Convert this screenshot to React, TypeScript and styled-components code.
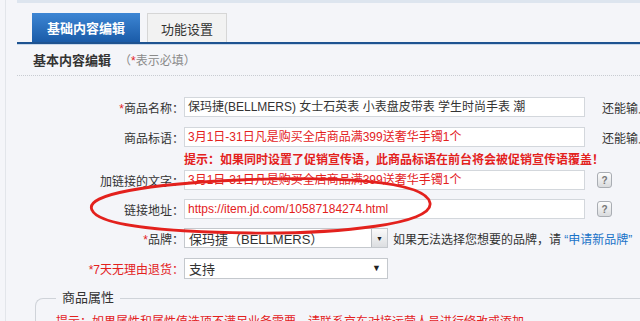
import React from 'react'
import styled, { createGlobalStyle } from 'styled-components'

const GlobalStyle = createGlobalStyle`
  body{
    margin:0;
    background:#f4f5f9;
    font-family:"Liberation Sans","Noto Sans CJK SC",sans-serif;
    font-size:12px;
    color:#333;
  }
`

const RED = '#e3211d'

const Page = styled.div`
  position:relative;
  width:640px;
  height:321px;
  overflow:hidden;
  background:#f4f5f9;
`

const Frame = styled.div`
  margin-left:5px;
  height:100%;
  border-left:1px solid #e2e5ea;
  padding-left:11px;
`

const TopStrip = styled.div`
  height:3px;
  background:#dde5ef;
`

const TabBar = styled.div`
  display:flex;
  align-items:flex-end;
  gap:7px;
  padding:10px 0 0 15px;
  border-bottom:2px solid #1e5391;
  box-shadow:0 1px 0 #c9d8ea;
`

const Tab = styled.div<{ $active?: boolean }>`
  box-sizing:border-box;
  display:flex;
  align-items:center;
  justify-content:center;
  width:${p => (p.$active ? '108px' : '80px')};
  height:29px;
  font-size:13px;
  font-weight:${p => (p.$active ? 700 : 400)};
  color:${p => (p.$active ? '#fff' : '#333')};
  background:${p => (p.$active ? 'linear-gradient(#3d86d4,#1a5ba8)' : '#f2f2f2')};
  border:${p => (p.$active ? 'none' : '1px solid #d6d6d6')};
  border-bottom:none;
`

const SectionHead = styled.div`
  display:flex;
  align-items:center;
  height:31px;
  padding-left:16px;
  border-bottom:1px dotted #c8ccd2;
`

const SectionTitle = styled.span`
  font-size:13px;
  font-weight:700;
  color:#333;
`

const SectionNote = styled.span`
  margin-left:8px;
  color:#8a8a8a;
`

const Star = styled.span`
  color:${RED};
`

const Form = styled.div`
  padding-top:21px;
`

const Row = styled.div<{ $gap?: number }>`
  display:flex;
  align-items:center;
  height:20px;
  margin-bottom:${p => p.$gap ?? 9}px;
`

const Label = styled.div<{ $red?: boolean }>`
  flex-shrink:0;
  width:167px;
  text-align:right;
  white-space:nowrap;
  color:${p => (p.$red ? RED : '#333')};
`

const Input = styled.div<{ $red?: boolean }>`
  box-sizing:border-box;
  flex-shrink:0;
  width:401px;
  height:20px;
  padding:0 3px;
  line-height:18px;
  background:#fff;
  border:1px solid #d3d7dc;
  white-space:nowrap;
  overflow:hidden;
  color:${p => (p.$red ? RED : '#333')};
`

const Remain = styled.span`
  margin-left:17px;
  white-space:nowrap;
  color:#333;
`

const HelpBtn = styled.span`
  box-sizing:border-box;
  display:inline-flex;
  align-items:center;
  justify-content:center;
  flex-shrink:0;
  margin-left:12px;
  width:15px;
  height:16px;
  border:1px solid #a9adb3;
  border-radius:3px;
  background:linear-gradient(#fdfdfd,#d9dbde);
  font-size:10px;
  font-weight:700;
  color:#777;
`

const Hint = styled.div`
  margin:5px 0 2px 167px;
  line-height:16px;
  color:${RED};
  font-weight:700;
  white-space:nowrap;
`

const Select = styled.div<{ $h?: number }>`
  box-sizing:border-box;
  flex-shrink:0;
  display:flex;
  align-items:center;
  width:204px;
  height:${p => p.$h ?? 20}px;
  padding-left:4px;
  background:#fff;
  border:1px solid #c4c8cd;
  font-size:13px;
  color:#333;
  white-space:nowrap;
`

const ArrowBox = styled.span`
  box-sizing:border-box;
  margin-left:auto;
  display:flex;
  align-items:center;
  justify-content:center;
  width:16px;
  height:100%;
  border-left:1px solid #b9bdc2;
  background:linear-gradient(#fafafa,#dcdee1);
  font-size:7px;
  color:#222;
`

const Arrow = styled.span`
  margin-left:auto;
  margin-right:6px;
  font-size:9px;
  color:#222;
`

const BrandNote = styled.span`
  margin-left:5px;
  white-space:nowrap;
  color:#333;
`

const BrandLink = styled.span`
  color:#1a73c8;
`

const Fieldset = styled.fieldset`
  margin:12px 0 0 18px;
  padding:0 0 0 20px;
  border:1px solid #cfd3d9;
  border-right:none;
  border-bottom:none;
  border-radius:8px 0 0 0;
`

const Legend = styled.legend`
  padding:0 6px;
  font-size:13px;
  line-height:16px;
  color:#333;
`

const FieldHint = styled.div`
  margin-top:6px;
  white-space:nowrap;
  color:${RED};
  font-size:12px;
`

const Mark = styled.svg`
  position:absolute;
  left:0;
  top:0;
  pointer-events:none;
`

const slogan = '3月1日-31日凡是购买全店商品满399送奢华手镯1个'

export default function App() {
  return <Page>
    <GlobalStyle/>
    <Frame>
      <TopStrip/>
      <TabBar>
        <Tab $active>基础内容编辑</Tab>
        <Tab>功能设置</Tab>
      </TabBar>
      <SectionHead>
        <SectionTitle>基本内容编辑</SectionTitle>
        <SectionNote>（<Star>*</Star>表示必填）</SectionNote>
      </SectionHead>
      <Form>
        <Row $gap={10}>
          <Label><Star>*</Star>商品名称：</Label>
          <Input>保玛捷(BELLMERS) 女士石英表 小表盘皮带表 学生时尚手表 潮</Input>
          <Remain>还能输入10字</Remain>
        </Row>
        <Row $gap={0}>
          <Label>商品标语：</Label>
          <Input $red>{slogan}</Input>
          <Remain>还能输入18字</Remain>
        </Row>
        <Hint>提示：如果同时设置了促销宣传语，此商品标语在前台将会被促销宣传语覆盖！</Hint>
        <Row>
          <Label>加链接的文字：</Label>
          <Input $red>{slogan}</Input>
          <HelpBtn>?</HelpBtn>
        </Row>
        <Row>
          <Label>链接地址：</Label>
          <Input $red>https://item.jd.com/10587184274.html</Input>
          <HelpBtn>?</HelpBtn>
        </Row>
        <Row $gap={10}>
          <Label><Star>*</Star>品牌：</Label>
          <Select>保玛捷（BELLMERS）<ArrowBox>▼</ArrowBox></Select>
          <BrandNote>如果无法选择您想要的品牌，请 <BrandLink>“申请新品牌”</BrandLink></BrandNote>
        </Row>
        <Row>
          <Label $red>*7天无理由退货：</Label>
          <Select $h={21}>支持<Arrow>▼</Arrow></Select>
        </Row>
        <Fieldset>
          <Legend>商品属性</Legend>
          <FieldHint>提示：如果属性和属性值选项不满足业务需要，请联系京东对接运营人员进行修改或添加</FieldHint>
        </Fieldset>
      </Form>
    </Frame>
    <Mark width="640" height="321" viewBox="0 0 640 321">
      <path
        d="M92 210 C84 194 150 184 240 180 C330 176 426 180 430 203 C434 224 340 234 250 233 C160 232 98 225 92 210"
        fill="none"
        stroke="#e3211d"
        strokeWidth="2.8"
        strokeLinecap="round"
      />
    </Mark>
  </Page>
}
